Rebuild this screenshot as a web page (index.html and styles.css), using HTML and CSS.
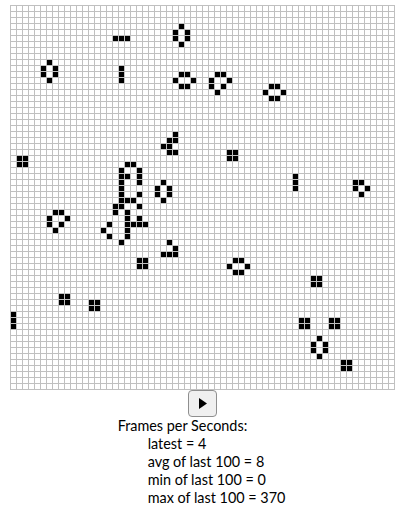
FILE: index.html

```html
<!DOCTYPE html>
<html lang="en">
<head>
  <meta charset="UTF-8" />
  <title>Game of Life</title>
  <meta name="viewport" content="width=device-width, initial-scale=1.0" />
  <link rel="stylesheet" href="styles.css">
</head>
<body>
  <div class="container">
    <canvas id="life" width="385" height="385"></canvas>
    <button class="play" aria-label="Play">
      <svg width="8" height="11" viewBox="0 0 8 11"><polygon points="0,0 8,5.5 0,11" /></svg>
    </button>
    <div class="stats">
      <div>Frames per Seconds:</div>
      <div class="stat">latest = 4</div>
      <div class="stat">avg of last 100 = 8</div>
      <div class="stat">min of last 100 = 0</div>
      <div class="stat">max of last 100 = 370</div>
    </div>
  </div>

  <script>
    // live cells, one entry per row: [row, col, col, ...]
    const rows = [
      [3, 28], [4, 27, 29], [5, 17, 18, 19, 27, 29], [6, 28],
      [9, 6], [10, 5, 7, 18], [11, 5, 7, 18, 28, 29, 34, 35],
      [12, 6, 18, 27, 30, 33, 36], [13, 28, 29, 33, 35, 43, 44],
      [14, 34, 42, 45], [15, 43, 44],
      [21, 27], [22, 26, 27], [23, 25, 26], [24, 26, 27, 36, 37],
      [25, 1, 2, 36, 37], [26, 1, 2, 19, 20], [27, 18, 21],
      [28, 18, 19, 21, 47], [29, 18, 21, 25, 47, 57, 58],
      [30, 18, 24, 26, 47, 57, 59], [31, 18, 21, 24, 26, 58],
      [32, 18, 19, 20, 25], [33, 17, 18, 21], [34, 7, 8, 17, 19],
      [35, 6, 9, 19, 21], [36, 6, 8, 16, 19, 20, 21, 22], [37, 7, 15, 19],
      [38, 16, 19], [39, 18, 26], [40, 27], [41, 25, 26, 27],
      [42, 21, 22, 37, 38], [43, 21, 22, 36, 39], [44, 37, 38],
      [45, 50, 51], [46, 50, 51], [48, 8, 9], [49, 8, 9, 13, 14],
      [50, 13, 14], [51, 0], [52, 0, 48, 49, 53, 54], [53, 0, 48, 49, 53, 54],
      [55, 51], [56, 50, 52], [57, 50, 52], [58, 51], [59, 55, 56], [60, 55, 56]
    ];

    function draw() {
      const ctx = document.getElementById("life").getContext("2d");
      const step = 6;
      ctx.fillStyle = "#fff";
      ctx.fillRect(0, 0, 385, 385);
      ctx.fillStyle = "#c0c0c0";
      for (let i = 0; i <= 64; i++) {
        ctx.fillRect(i * step, 0, 1, 385);
        ctx.fillRect(0, i * step, 385, 1);
      }
      ctx.fillStyle = "#000";
      for (const [row, ...cols] of rows) {
        for (const col of cols) {
          ctx.fillRect(col * step + 1, row * step + 1, 5, 5);
        }
      }
    }

    draw();
  </script>
</body>
</html>
```

FILE: styles.css

```css
body { margin: 5px 12px 0 10px; background: #fff; color: #000; font-family: "Lato", sans-serif; font-size: 14.4px; line-height: 18px; }
.container { display: flex; flex-direction: column; align-items: center; }
canvas { display: block; }
.play {
  display: flex; align-items: center; justify-content: center;
  width: 29px; height: 27px; padding: 0;
  background: #f0f0f0; border: 1px solid #8f8f8f; border-radius: 4px;
}
.play polygon { fill: #000; }
.stats { padding-right: 2px; }
.stat { padding-left: 30px; }
```
